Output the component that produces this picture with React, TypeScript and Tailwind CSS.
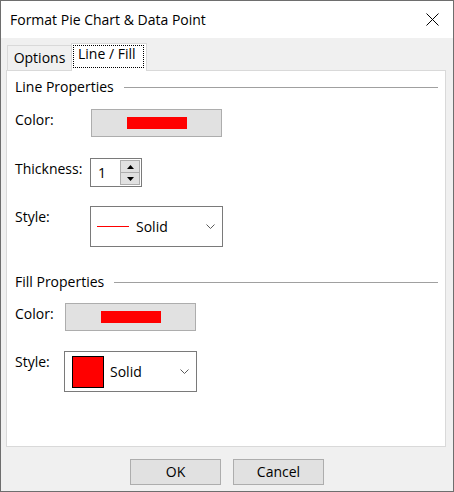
import React from "react";

const Chevron = () => (
  <svg width="9" height="5" viewBox="0 0 9 5" className="ml-auto">
    <polyline points="0.5,0.5 4.5,4.5 8.5,0.5" fill="none" stroke="#5a5a5a" strokeWidth="1" />
  </svg>
);

const SectionHeader = ({ title, className }: { title: string; className?: string }) => (
  <div className={"flex items-center pl-[8px] pr-[7px] h-[20px] leading-[20px] " + (className ?? "")}>
    <span>{title}</span>
    <div className="flex-1 h-px bg-[#a0a0a0] ml-[10px]" />
  </div>
);

const ColorButton = () => (
  <button className="w-[131px] h-[28px] bg-[#e1e1e1] border border-[#adadad] flex items-center justify-center">
    <div className="w-[60px] h-[12px] bg-[#ff0000]" />
  </button>
);

const App: React.FC = () => {
  return (
    <div className="w-[454px] h-[492px] border border-[#6e6e6e] bg-[#f0f0f0] flex flex-col font-['Open_Sans',sans-serif] text-[14px] text-black overflow-hidden">
      {/* title bar */}
      <div className="h-[37px] shrink-0 bg-white flex items-center justify-between pl-[9px] pr-[14px]">
        <span className="leading-[20px]">Format Pie Chart &amp; Data Point</span>
        <svg width="13" height="13" viewBox="0 0 13 13">
          <line x1="0.5" y1="0.5" x2="12.5" y2="12.5" stroke="#000" strokeWidth="1" />
          <line x1="12.5" y1="0.5" x2="0.5" y2="12.5" stroke="#000" strokeWidth="1" />
        </svg>
      </div>

      <div className="flex-1 flex flex-col pl-[5px] pt-[5px]">
        {/* tabs */}
        <div className="flex items-end h-[27px] pl-px">
          <div className="w-[64px] h-[25px] border-t border-l border-[#d9d9d9] flex items-center justify-center leading-[18px]">
            Options
          </div>
          <div className="w-[76px] h-[28px] -mb-px relative z-10 bg-white border border-b-0 border-[#d9d9d9] pt-[1px] pl-[1px] pr-[2px]">
            <div className="h-[23px] border border-dotted border-black px-[4px] leading-[14px] pt-[1px]">
              Line / Fill
            </div>
          </div>
        </div>

        {/* panel */}
        <div className="w-[440px] h-[377px] bg-white border border-[#d9d9d9] flex flex-col">
          <SectionHeader title="Line Properties" className="mt-[6px]" />

          <div className="flex items-start pl-[8px] mt-[12px]">
            <span className="w-[76px] leading-[18px] pt-[2px]">Color:</span>
            <ColorButton />
          </div>

          <div className="flex items-start pl-[8px] mt-[21px]">
            <span className="w-[75px] leading-[18px] pt-[2px]">Thickness:</span>
            <div className="w-[52px] h-[29px] border border-[#7a7a7a] flex">
              <div className="w-[29px] flex items-center pl-[7px]">1</div>
              <div className="flex-1 flex flex-col border border-[#adadad] m-[1px] ml-0">
                <div className="flex-1 bg-[#e1e1e1] flex items-center justify-center border-b border-[#adadad]">
                  <svg width="7" height="4" viewBox="0 0 7 4">
                    <polygon points="3.5,0 7,4 0,4" fill="#000" />
                  </svg>
                </div>
                <div className="flex-1 bg-[#e1e1e1] flex items-center justify-center">
                  <svg width="7" height="4" viewBox="0 0 7 4">
                    <polygon points="0,0 7,0 3.5,4" fill="#000" />
                  </svg>
                </div>
              </div>
            </div>
          </div>

          <div className="flex items-start pl-[8px] mt-[19px]">
            <span className="w-[75px] leading-[18px] pt-[2px]">Style:</span>
            <div className="w-[133px] h-[41px] border border-[#7a7a7a] flex items-center pl-[6px] pr-[7px]">
              <div className="w-[32px] h-px bg-[#ff0000]" />
              <span className="ml-[7px] leading-[18px]">Solid</span>
              <Chevron />
            </div>
          </div>

          <SectionHeader title="Fill Properties" className="mt-[25px]" />

          <div className="flex items-start pl-[8px] mt-[11px]">
            <span className="w-[50px] leading-[18px] pt-[2px]">Color:</span>
            <ColorButton />
          </div>

          <div className="flex items-start pl-[8px] mt-[20px]">
            <span className="w-[49px] leading-[18px] pt-[2px]">Style:</span>
            <div className="w-[133px] h-[41px] border border-[#7a7a7a] flex items-center pl-[7px] pr-[7px]">
              <div className="w-[32px] h-[32px] bg-[#ff0000] border border-black" />
              <span className="ml-[6px] leading-[18px]">Solid</span>
              <Chevron />
            </div>
          </div>
        </div>

        {/* buttons */}
        <div className="flex justify-center gap-[12px] mt-[12px] pr-[5px]">
          <button className="w-[91px] h-[26px] bg-[#e1e1e1] border border-[#adadad] leading-[18px]">OK</button>
          <button className="w-[91px] h-[26px] bg-[#e1e1e1] border border-[#adadad] leading-[18px]">Cancel</button>
        </div>
      </div>
    </div>
  );
};

export default App;
